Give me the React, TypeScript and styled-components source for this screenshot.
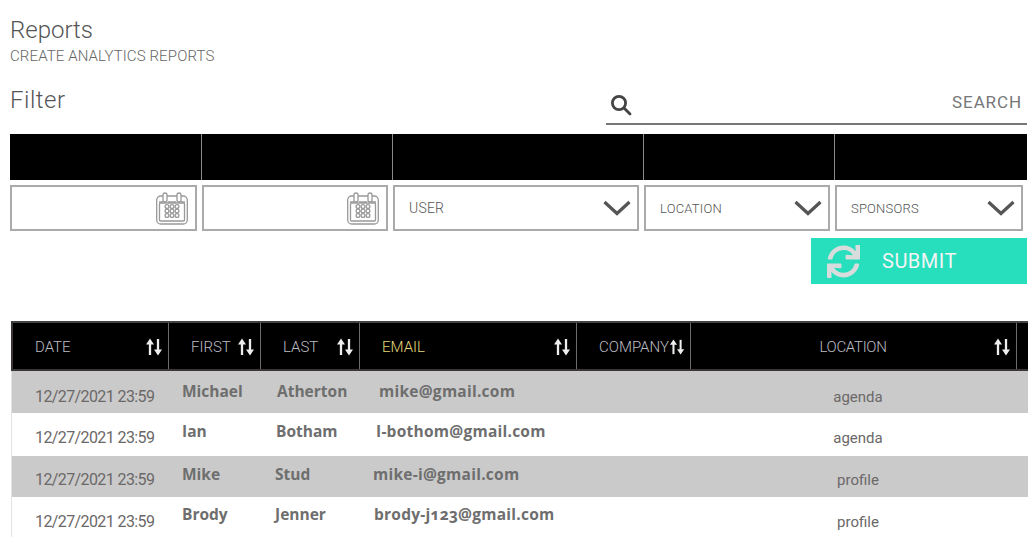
import React from "react";
import styled, { createGlobalStyle } from "styled-components";
import { FaSync } from "react-icons/fa";

const Global = createGlobalStyle`
  html, body { margin: 0; padding: 0; background: #fff; }
  body { font-family: "Roboto", "Liberation Sans", sans-serif; overflow: hidden; }
`;

const Page = styled.div`
  width: 1034px;
  height: 537px;
  box-sizing: border-box;
  padding: 16px 7px 0 10px;
  overflow: hidden;
`;
const Title = styled.h1`
  margin: 0;
  font-size: 24px;
  line-height: 28px;
  font-weight: 300;
  color: #555;
`;
const Subtitle = styled.div`
  margin-top: 3px;
  font-size: 15px;
  line-height: 18px;
  font-weight: 300;
  color: #666;
  letter-spacing: 0.12px;
`;
const FilterRow = styled.div`
  display: flex;
  justify-content: space-between;
  margin-top: 17px;
  height: 43px;
`;
const FilterTitle = styled.h2`
  margin: 0;
  padding-top: 3px;
  font-size: 24px;
  line-height: 30px;
  font-weight: 300;
  color: #555;
  letter-spacing: 0.5px;
`;
const SearchBox = styled.div`
  width: 421px;
  height: 43px;
  box-sizing: border-box;
  border-bottom: 2px solid #777;
  display: flex;
  align-items: center;
  justify-content: space-between;
  padding: 5px 5px 0 4px;
  color: #444;
`;
const SearchLabel = styled.span`
  font-size: 17px;
  font-weight: 400;
  color: #777;
  letter-spacing: 0.9px;
  margin-top: -6px;
`;
const BlackBar = styled.div`
  margin-top: 9px;
  height: 46px;
  background: #000;
  display: grid;
  grid-template-columns: 192px 191px 251px 191px 1fr;
`;
const BarCell = styled.div`
  border-right: 1.5px solid #8a8a8a;
  &:last-child { border-right: 0; }
`;
const Controls = styled.div`
  margin-top: 5px;
  display: flex;
  gap: 5px;
`;
const Field = styled.div<{ $w: number }>`
  width: ${(p) => p.$w}px;
  height: 46px;
  box-sizing: border-box;
  border: 2px solid #aaa;
  display: flex;
  align-items: center;
  justify-content: space-between;
  padding: 0 6px 0 14px;
  color: #666;
`;
const DateField = styled(Field)`
  justify-content: flex-end;
  padding-right: 7px;
`;
const FieldLabel = styled.span<{ $tight?: boolean }>`
  font-size: ${(p) => (p.$tight ? 13 : 14)}px;
  font-weight: 300;
  color: #555;
  letter-spacing: 0.2px;
`;
const ActionRow = styled.div`
  margin-top: 7px;
  display: flex;
  justify-content: flex-end;
`;
const Submit = styled.button`
  width: 216px;
  height: 46px;
  border: 0;
  padding: 0 0 0 16px;
  background: #27dfbd;
  color: #f4f4f4;
  display: flex;
  align-items: center;
  gap: 22px;
  font-family: inherit;
  font-size: 20px;
  font-weight: 400;
  letter-spacing: 0.5px;
  svg { color: #d9dcdc; }
`;
const Table = styled.div`
  margin: 37px 0 0 1px;
  width: 1017px;
`;
const Columns = "156px 92px 99px 217px 114px 326px 1fr";
const HeadRow = styled.div`
  display: grid;
  grid-template-columns: ${Columns};
  height: 50px;
  box-sizing: border-box;
  background: #000;
  border-top: 2px solid #444;
  border-left: 2px solid #3a3636;
  border-bottom: 2px solid #3a3636;
`;
const HeadCell = styled.div<{ $pad: number }>`
  display: flex;
  align-items: center;
  box-sizing: border-box;
  justify-content: space-between;
  padding: 2px 5px 0 ${(p) => p.$pad}px;
  border-right: 1px solid #6e6a6a;
  font-size: 15px;
  font-weight: 300;
  color: #bdbdc4;
  &:last-child { border-right: 0; }
`;
const CenteredLabel = styled.span`
  flex: 1;
  text-align: center;
  padding-left: 22px;
  letter-spacing: -0.3px;
`;
const Email = styled.span`
  color: #e6d67a;
`;
const Row = styled.div<{ $odd: boolean; $h: number }>`
  display: grid;
  grid-template-columns: ${Columns};
  height: ${(p) => p.$h}px;
  background: ${(p) => (p.$odd ? "#cacaca" : "#fff")};
  border-left: 1px solid #e4e4e4;
`;
const Cell = styled.div<{ $left?: number; $drop?: number }>`
  box-sizing: border-box;
  white-space: nowrap;
  padding-left: ${(p) => p.$left ?? 0}px;
  padding-top: ${(p) => p.$drop ?? 0}px;
`;
const DateCell = styled(Cell)`
  font-size: 16px;
  font-weight: 400;
  line-height: 20px;
  color: #6b6868;
  letter-spacing: -0.6px;
`;
const NameCell = styled(Cell)`
  font-family: "Open Sans", sans-serif;
  font-size: 15.5px;
  font-weight: 700;
  line-height: 20px;
  color: #6e6e6e;
`;
const EmailCell = styled(NameCell)`
  letter-spacing: 0.25px;
  font-variant-numeric: oldstyle-nums;
`;
const PlaceCell = styled(Cell)`
  grid-column: 6;
  text-align: center;
  font-size: 15px;
  line-height: 20px;
  color: #6b6868;
  padding-left: 10px;
`;

const CalendarIcon = () => (
  <svg width="32" height="33" viewBox="0 0 32 33" fill="none" stroke="#999" strokeWidth="1.3">
    <rect x="0.7" y="4" width="30.6" height="28" rx="4" />
    <path d="M3 10 H7 M12 10 H20 M25 10 H29" />
    <rect x="3.5" y="11" width="25" height="18" rx="1" />
    <path d="M7 3 Q7 1 9 1 Q11 1 11 3 V9 Q9 11 7 9 Z M21 3 Q21 1 23 1 Q25 1 25 3 V9 Q23 11 21 9 Z" fill="#fff" />
    {[11, 16, 21].map((x) =>
      [14.5, 19, 23.5].map((y) => <circle key={`${x}-${y}`} cx={x} cy={y} r="1.9" />)
    )}
  </svg>
);
const Chevron = () => (
  <svg width="28" height="16" viewBox="0 0 28 16" fill="none" stroke="#555" strokeWidth="3.2">
    <path d="M1.5 2 L14 13.5 L26.5 2" />
  </svg>
);
const SearchIcon = () => (
  <svg width="22" height="22" viewBox="0 0 22 22" fill="none" stroke="#444" strokeWidth="2.8">
    <circle cx="9" cy="9" r="6.6" />
    <path d="M14 14 L20 20" strokeLinecap="round" />
  </svg>
);
const SortIcon = () => (
  <svg width="18" height="18" viewBox="0 0 18 18" fill="#eee" stroke="#eee" strokeWidth="2.3">
    <path d="M5 17 V5" />
    <path d="M13 1 V13" />
    <path d="M5 0.5 L9 6.5 H1 Z M13 17.5 L9 11.5 H17 Z" stroke="none" />
  </svg>
);

const rows = [
  { h: 42, first: "Michael", last: "Atherton", lastAt: 17, email: "mike@gmail.com", emailAt: 20, place: "agenda", nameDrop: 10, dateDrop: 16 },
  { h: 43, first: "Ian", last: "Botham", lastAt: 16, email: "I-bothom@gmail.com", emailAt: 17, place: "agenda", nameDrop: 8, dateDrop: 15 },
  { h: 41, first: "Mike", last: "Stud", lastAt: 15, email: "mike-i@gmail.com", emailAt: 14, place: "profile", nameDrop: 8, dateDrop: 14 },
  { h: 43, first: "Brody", last: "Jenner", lastAt: 15, email: "brody-j123@gmail.com", emailAt: 15, place: "profile", nameDrop: 7, dateDrop: 15 },
];

export default function App() {
  return (
    <Page>
      <Global />
      <Title>Reports</Title>
      <Subtitle>CREATE ANALYTICS REPORTS</Subtitle>
      <FilterRow>
        <FilterTitle>Filter</FilterTitle>
        <SearchBox>
          <SearchIcon />
          <SearchLabel>SEARCH</SearchLabel>
        </SearchBox>
      </FilterRow>
      <BlackBar>
        {[0, 1, 2, 3, 4].map((i) => (
          <BarCell key={i} />
        ))}
      </BlackBar>
      <Controls>
        <DateField $w={187}><CalendarIcon /></DateField>
        <DateField $w={186}><CalendarIcon /></DateField>
        <Field $w={246}><FieldLabel>USER</FieldLabel><Chevron /></Field>
        <Field $w={186}><FieldLabel $tight>LOCATION</FieldLabel><Chevron /></Field>
        <Field $w={188}><FieldLabel $tight>SPONSORS</FieldLabel><Chevron /></Field>
      </Controls>
      <ActionRow>
        <Submit>
          <FaSync size={33} />
          <span>SUBMIT</span>
        </Submit>
      </ActionRow>
      <Table>
        <HeadRow>
          <HeadCell $pad={22}>DATE<SortIcon /></HeadCell>
          <HeadCell $pad={22}>FIRST<SortIcon /></HeadCell>
          <HeadCell $pad={22}>LAST<SortIcon /></HeadCell>
          <HeadCell $pad={22}><Email>EMAIL</Email><SortIcon /></HeadCell>
          <HeadCell $pad={22}>COMPANY<SortIcon /></HeadCell>
          <HeadCell $pad={0}><CenteredLabel>LOCATION</CenteredLabel><SortIcon /></HeadCell>
          <HeadCell $pad={0} />
        </HeadRow>
        {rows.map((r, i) => (
          <Row key={i} $odd={i % 2 === 0} $h={r.h}>
            <DateCell $left={23} $drop={r.dateDrop}>12/27/2021 23:59</DateCell>
            <NameCell $left={14} $drop={r.nameDrop}>{r.first}</NameCell>
            <NameCell $left={r.lastAt} $drop={r.nameDrop}>{r.last}</NameCell>
            <EmailCell $left={r.emailAt} $drop={r.nameDrop}>{r.email}</EmailCell>
            <PlaceCell $drop={r.dateDrop}>{r.place}</PlaceCell>
          </Row>
        ))}
      </Table>
    </Page>
  );
}
